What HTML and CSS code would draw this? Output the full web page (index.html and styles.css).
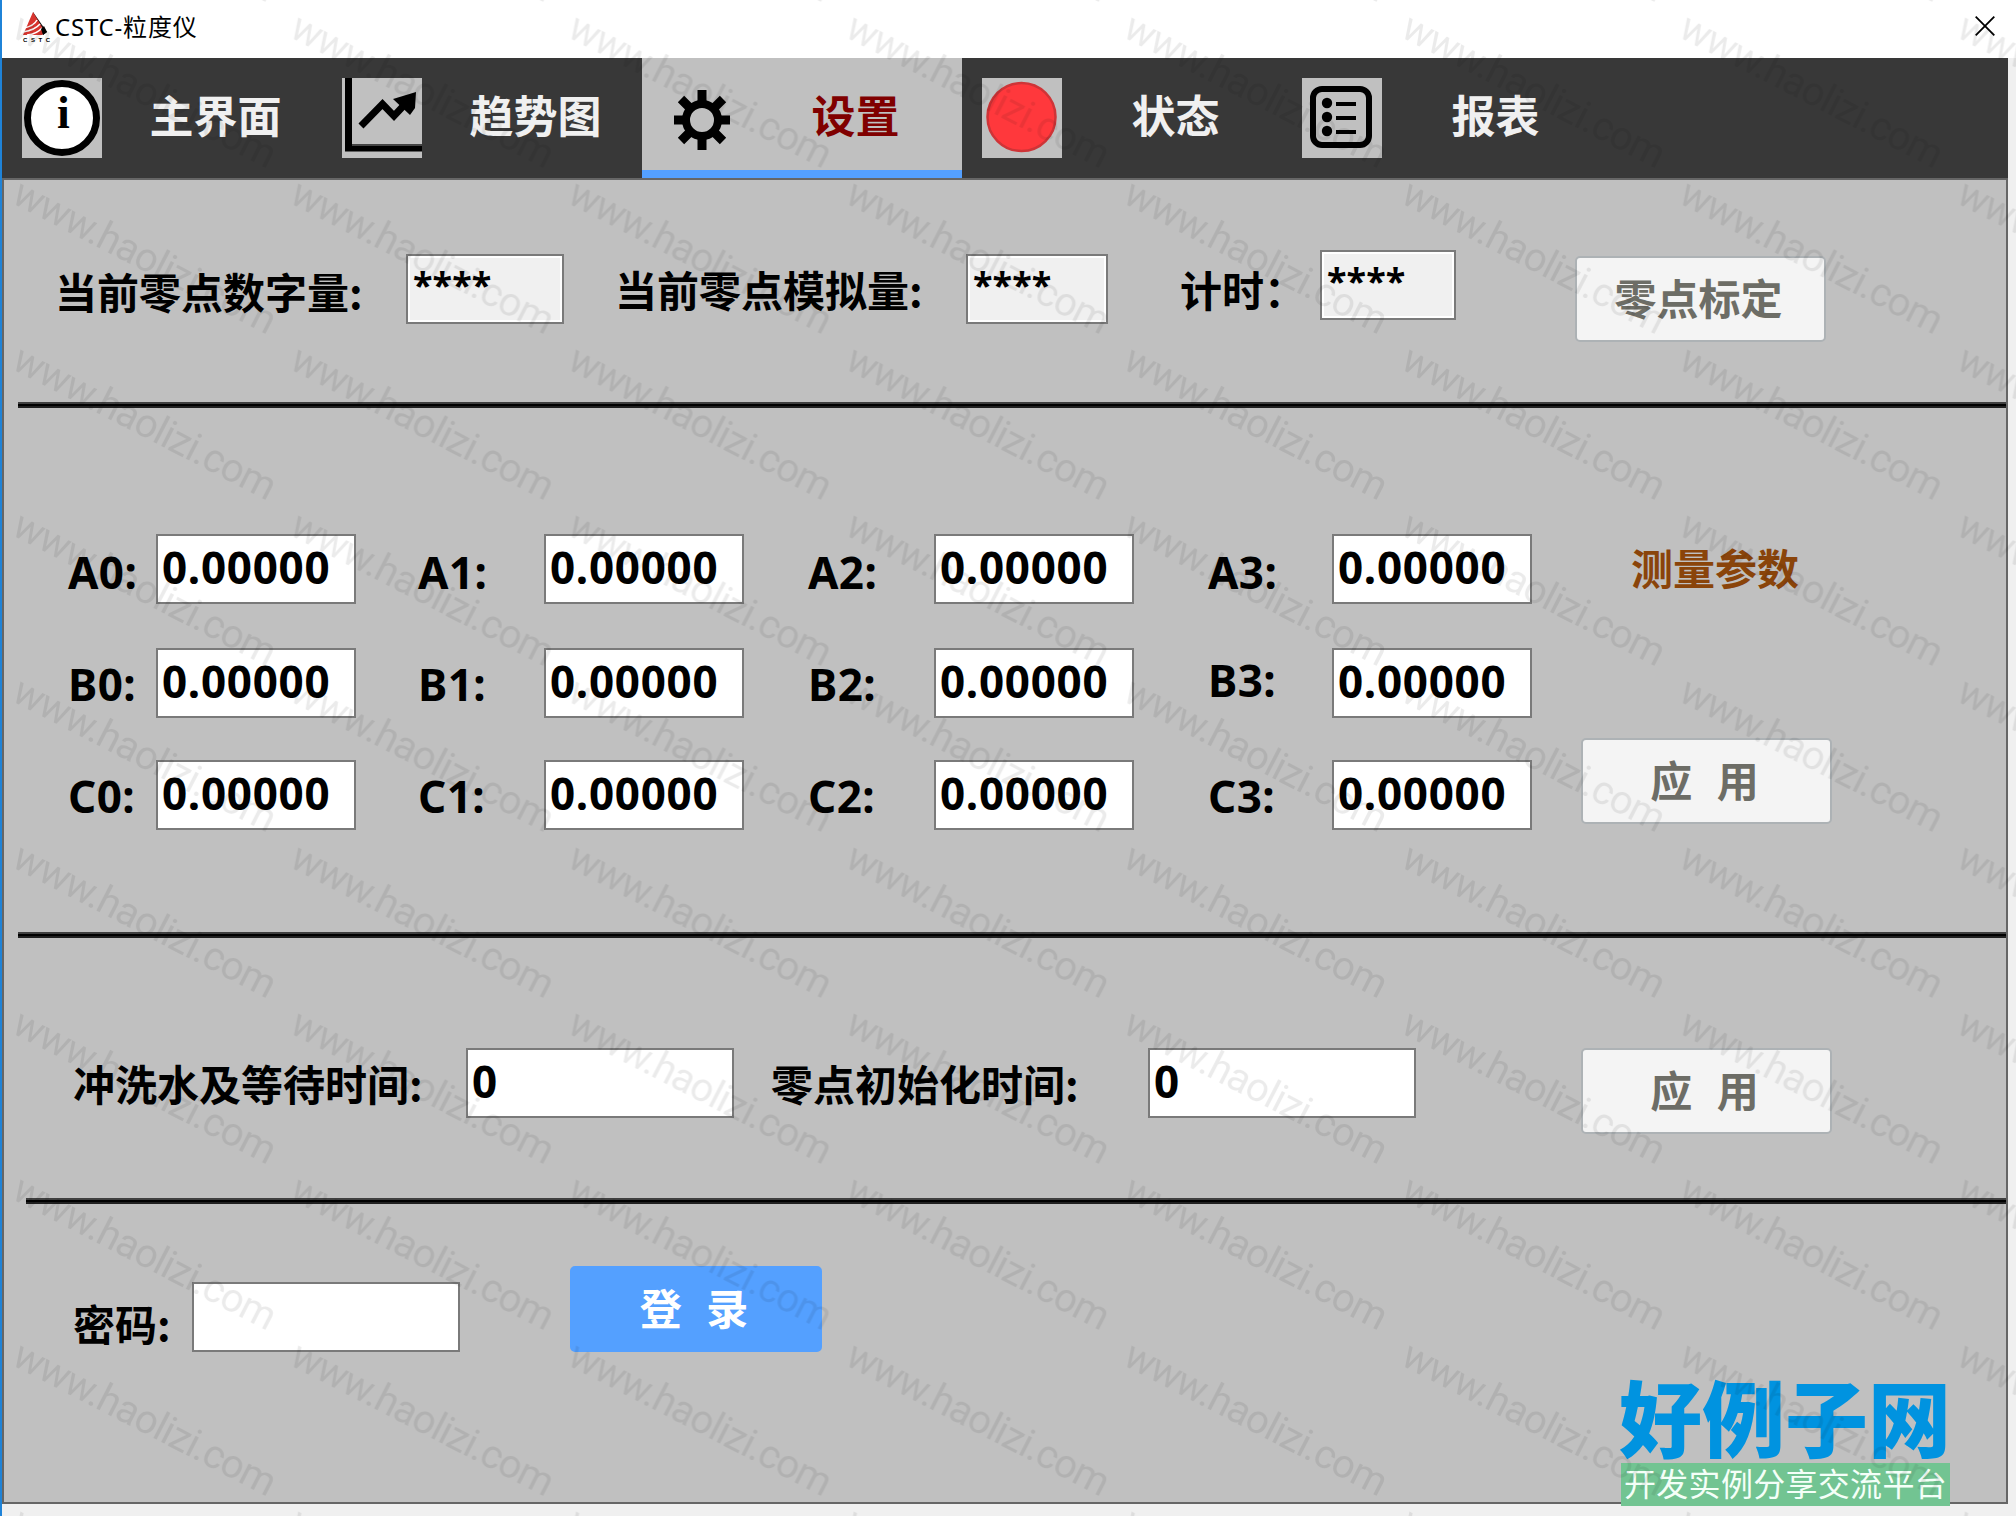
FILE: index.html
```html
<!DOCTYPE html>
<html lang="zh-CN">
<head>
<meta charset="utf-8">
<title>CSTC-粒度仪</title>
<link rel="stylesheet" href="styles.css">
</head>
<body>
<div class="window">
  <header class="titlebar">
    <svg class="logo" width="30" height="34" viewBox="0 0 30 34">
      <path d="M12 2L26 22L22 25L12 6Z" fill="#111"/>
      <path d="M12 2L2 25H21L24 22Z" fill="#d8352f"/>
      <path d="M3 18Q13 16 16 10M2 22Q14 20 19 14M6 25Q16 24 21 18" fill="none" stroke="#fff" stroke-width="1.5"/>
      <path d="M20 19L23 16L26 22L22 25Z" fill="#000"/>
      <text x="2" y="32" font-size="6" font-weight="bold" textLength="27">CSTC</text>
    </svg>
    <h1 class="title">CSTC-粒度仪</h1>
    <svg class="close" width="20" height="20" viewBox="0 0 20 20"><path d="M.7.7L19.3 19.3M19.3.7L.7 19.3" stroke="#000" stroke-width="1.8"/></svg>
  </header>

  <nav class="tabs">
    <a class="tab">
      <svg class="tile" viewBox="0 0 80 80"><circle cx="40" cy="40" r="34.5" fill="#fff" stroke="#000" stroke-width="7"/><text class="info-i" x="41.500" y="50" text-anchor="middle">i</text></svg>
      <span class="tab-text">主界面</span>
    </a>
    <a class="tab">
      <svg class="tile" viewBox="0 0 80 80"><path d="M6.500 0V70H80" fill="none" stroke="#000" stroke-width="7"/><path d="M10 67H80" stroke="#444" stroke-width="2"/><path d="M19 48L40.500 26L52 38L66 23" fill="none" stroke="#000" stroke-width="7"/><path d="M74 14L51 21L68 37L73 30Z"/></svg>
      <span class="tab-text">趋势图</span>
    </a>
    <a class="tab active">
      <svg class="tile" viewBox="0 0 80 80">
        <circle cx="40" cy="42" r="16" fill="none" stroke="#000" stroke-width="8"/>
        <path d="M40 12V25M40 59V72M12 42H24M56 42H68M19 21L28 30M61 21L52 30M19 63L28 54M61 63L52 54" stroke="#000" stroke-width="9"/>
      </svg>
      <span class="tab-text">设置</span>
    </a>
    <a class="tab">
      <svg class="tile" viewBox="0 0 80 80"><circle cx="39.500" cy="39" r="34" fill="#ff383c" stroke="#cf3437" stroke-width="2.500"/></svg>
      <span class="tab-text">状态</span>
    </a>
    <a class="tab">
      <svg class="tile" viewBox="0 0 80 80"><rect x="11" y="11" width="56" height="56" rx="9" fill="none" stroke="#000" stroke-width="6"/><g><circle cx="25" cy="25" r="5.200"/><circle cx="25" cy="39" r="5.200"/><circle cx="25" cy="53" r="5.200"/></g><path d="M34 26H54M34 40H54M34 54H54" stroke="#000" stroke-width="4"/></svg>
      <span class="tab-text">报表</span>
    </a>
  </nav>

  <main class="panel">
    <section class="zero">
      <label class="label zero-digital">当前零点数字量:</label>
      <div class="field readonly">****</div>
      <label class="label zero-analog">当前零点模拟量:</label>
      <div class="field readonly">****</div>
      <label class="label timing">计时：</label>
      <div class="field readonly timer">****</div>
      <button class="button zero-button">零点标定</button>
    </section>
    <hr class="rule">
    <section class="params">
      <div class="param-grid">
        <label class="key">A0:</label><div class="field">0.00000</div>
        <label class="key">A1:</label><div class="field">0.00000</div>
        <label class="key">A2:</label><div class="field">0.00000</div>
        <label class="key">A3:</label><div class="field">0.00000</div>
        <label class="key b">B0:</label><div class="field">0.00000</div>
        <label class="key b">B1:</label><div class="field">0.00000</div>
        <label class="key b">B2:</label><div class="field">0.00000</div>
        <label class="key raised">B3:</label><div class="field">0.00000</div>
        <label class="key b">C0:</label><div class="field">0.00000</div>
        <label class="key b">C1:</label><div class="field">0.00000</div>
        <label class="key b">C2:</label><div class="field">0.00000</div>
        <label class="key b">C3:</label><div class="field">0.00000</div>
      </div>
      <div class="param-side">
        <h2 class="heading">测量参数</h2>
        <button class="button">应 用</button>
      </div>
    </section>
    <hr class="rule">
    <section class="times">
      <label class="label">冲洗水及等待时间:</label>
      <div class="field">0</div>
      <label class="label">零点初始化时间:</label>
      <div class="field">0</div>
      <button class="button">应 用</button>
    </section>
    <hr class="rule short">
    <section class="login">
      <label class="label">密码:</label>
      <div class="field"></div>
      <button class="button primary">登 录</button>
    </section>
  </main>

  <aside class="brand">
    <div class="brand-name">好例子网</div>
    <div class="brand-line">开发实例分享交流平台</div>
  </aside>

  <svg class="watermark" width="2016" height="1516">
    <defs>
      <pattern id="mark" x="10" y="10" width="277.800" height="166" patternUnits="userSpaceOnUse">
        <text class="mark-text" transform="translate(0 26) rotate(27.300)" textLength="290">www.haolizi.com</text>
      </pattern>
    </defs>
    <rect width="2016" height="1516" fill="url(#mark)"/>
  </svg>
</div>
</body>
</html>
```

FILE: styles.css
```css
* { box-sizing: border-box; }

body {
  margin: 0;
  background: #f0f0f0;
  font-family: "Noto Sans CJK SC", "Noto Sans", sans-serif;
  color: #000;
}

.window {
  position: relative;
  width: 2016px;
  height: 1516px;
  overflow: hidden;
  border-left: 2px solid #1f83d8;
}

.titlebar {
  display: flex;
  height: 58px;
  padding: 10px 21px 0 19px;
  background: #fff;
}
.logo { flex: none; font-family: "Liberation Sans", sans-serif; }
.title {
  margin: 3px 0 0 4px;
  font: 400 24px/28px "Noto Sans", "Noto Sans CJK SC", sans-serif;
  letter-spacing: .8px;
}
.close { margin: 6px 0 0 auto; }

.tabs {
  display: flex;
  width: 2006px;
  height: 120px;
  background: #383838;
}
.tab {
  display: flex;
  align-items: flex-start;
  width: 320px;
  padding: 20px 0 0 20px;
  color: #f0f0f0;
}
.tab.active {
  background: #c0c0c0;
  border-bottom: 8px solid #54a0ff;
  color: #800000;
}
.tile { flex: none; width: 80px; height: 80px; background: #c0c0c0; }
.info-i { font: bold 46px "Liberation Serif", serif; }
.tab-text {
  width: 220px;
  margin-top: 14px;
  padding-left: 7px;
  text-align: center;
  font-size: 44px;
  line-height: 44px;
  font-weight: 700;
}

.panel {
  width: 2006px;
  height: 1326px;
  border: 2px solid #666;
  background: #c0c0c0;
}

.rule {
  height: 6px;
  margin: 0 0 0 14px;
  border: 0;
  background: linear-gradient(#404040 2px, #000 2px 4px, #202020 4px);
}
.rule.short { margin-left: 22px; }

.label, .heading {
  font-size: 42px;
  line-height: 42px;
  font-weight: 700;
  white-space: nowrap;
}
.field {
  height: 70px;
  padding: 9px 0 0 4px;
  border: 2px solid #7a7a7a;
  background: #fff;
  font: 700 44px/44px "Noto Sans", sans-serif;
  letter-spacing: .7px;
}
.readonly {
  padding: 7px 0 0 5px;
  background: #f0f0f0;
  box-shadow: inset 0 0 0 2px #fff;
  font-size: 36px;
  letter-spacing: .1px;
}
.button {
  width: 251px;
  height: 86px;
  padding: 0 4px 4px 0;
  border: 2px solid #adb2b5;
  border-radius: 5px;
  background: #f4f4f4;
  color: #6d6d66;
  font: 700 42px/42px "Noto Sans CJK SC", sans-serif;
  word-spacing: 15px;
}
.button.primary {
  width: 252px;
  border-color: #54a0ff;
  background: #54a0ff;
  color: #fff;
}

.zero {
  display: grid;
  grid-template-columns: 351px 158px 51px 351px 142px 72px 140px 136px 119px 251px;
  align-items: start;
  height: 222px;
  padding: 74px 0 0 51px;
}
.zero-digital { margin-top: 16px; }
.zero-analog { grid-column: 4; margin-top: 14px; }
.timing { grid-column: 7; margin-top: 14px; }
.timer { margin-top: -4px; }
.zero-button { grid-column: 10; margin-top: 2px; }

.params { display: flex; height: 524px; padding: 126px 0 0 64px; }
.param-grid {
  display: grid;
  grid-template-columns: 88px 200px 62px 126px 200px 64px 126px 200px 74px 124px 200px;
  grid-template-rows: 71px 69px 70px;
  row-gap: 43px;
  height: 296px;
}
.param-grid > :nth-child(8n+3) { grid-column: 4; }
.param-grid > :nth-child(8n+5) { grid-column: 7; }
.param-grid > :nth-child(8n+7) { grid-column: 10; }
.key {
  margin-top: 16px;
  font: 700 44px/44px "Noto Sans", sans-serif;
  letter-spacing: .4px;
}
.key.b { margin-top: 14px; }
.key.raised { margin-top: 10px; }
.param-side { margin-left: 49px; }
.heading { margin: 12px 0 0 50px; color: #8a440a; }
.param-side .button { margin-top: 150px; }

.times {
  display: grid;
  grid-template-columns: 393px 268px 37px 377px 268px 165px 251px;
  align-items: start;
  height: 260px;
  padding: 110px 0 0 69px;
}
.times .label { margin-top: 14px; }
.times .label:nth-of-type(2) { grid-column: 4; }
.times .button { grid-column: 7; }

.login {
  display: grid;
  grid-template-columns: 119px 268px 110px 252px;
  align-items: start;
  padding: 62px 0 0 69px;
}
.login .label { margin-top: 36px; }
.login .field { margin-top: 16px; }
.login .button { grid-column: 4; }

.brand {
  position: absolute;
  left: 1617px;
  top: 1372px;
  width: 331px;
}
.brand-name {
  height: 91px;
  color: #0093e0;
  font-size: 83px;
  line-height: 87px;
  font-weight: 900;
  white-space: nowrap;
}
.brand-line {
  height: 43px;
  margin-left: 2px;
  padding-left: 3px;
  background: #72c492;
  color: #f4fff8;
  font-size: 32px;
  line-height: 38px;
  letter-spacing: .3px;
  white-space: nowrap;
}

.watermark { position: absolute; left: -2px; top: 0; pointer-events: none; }
.mark-text { font: 400 40px Roboto, sans-serif; fill: #000; fill-opacity: .08; }
```
